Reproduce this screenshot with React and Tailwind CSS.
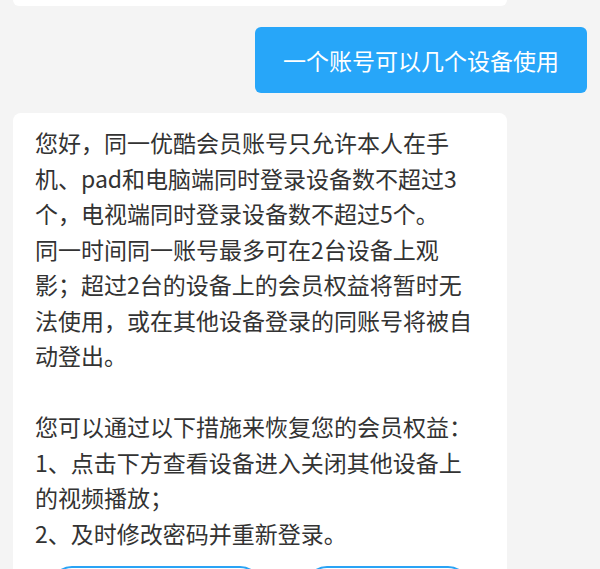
import React from 'react';

const cjk = "font-['Noto_Sans_CJK_SC','Noto_Sans',sans-serif]";

// reply text, broken where the reference wraps it
const answer = [
  '您好，同一优酷会员账号只允许本人在手',
  '机、pad和电脑端同时登录设备数不超过3',
  '个，电视端同时登录设备数不超过5个。',
  '同一时间同一账号最多可在2台设备上观',
  '影；超过2台的设备上的会员权益将暂时无',
  '法使用，或在其他设备登录的同账号将被自',
  '动登出。',
  '',
  '您可以通过以下措施来恢复您的会员权益：',
  '1、点击下方查看设备进入关闭其他设备上',
  '的视频播放；',
  '2、及时修改密码并重新登录。',
];

export default function App() {
  return (
    <div className={`w-[600px] h-[569px] overflow-hidden bg-[#f4f4f4] flex flex-col ${cjk}`}>
      {/* previous message, scrolled mostly out of view */}
      <div className="shrink-0 ml-[13px] w-[494px] h-[6px] bg-white rounded-b-[8px]" />

      {/* user question */}
      <div className="shrink-0 self-end mr-[13px] mt-[21px] h-[66px] px-[28px] flex items-center rounded-[6px] bg-[#27a6f9]">
        <span className="text-[23px] leading-none text-white">一个账号可以几个设备使用</span>
      </div>

      {/* reply card */}
      <div className="shrink-0 ml-[13px] mt-[20px] w-[494px] bg-white rounded-[8px] pt-[12px] pl-[22px] pr-[22px] pb-[16px]">
        <div className="text-[23px] leading-[35.5px] text-[#333333] whitespace-nowrap">
          {answer.map((line, i) =>
            line ? <p key={i}>{line}</p> : <p key={i} className="h-[35.5px]" />
          )}
        </div>
        <div className="mt-[15px] flex gap-[43px] pl-[15px]">
          <button className="w-[212px] h-[44px] rounded-full border-2 border-[#2aa3f5] text-[#2aa3f5] text-[20px]">
            查看设备
          </button>
          <button className="w-[165px] h-[44px] rounded-full border-2 border-[#2aa3f5] text-[#2aa3f5] text-[20px]">
            修改密码
          </button>
        </div>
      </div>
    </div>
  );
}
